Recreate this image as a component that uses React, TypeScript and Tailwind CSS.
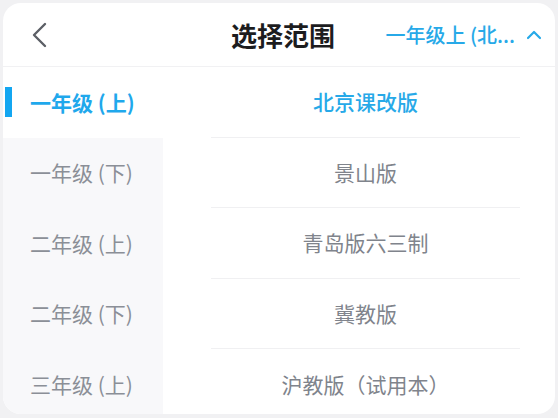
import React from "react";

const grades = ["一年级 (上)", "一年级 (下)", "二年级 (上)", "二年级 (下)", "三年级 (上)"];
const editions = ["北京课改版", "景山版", "青岛版六三制", "冀教版", "沪教版（试用本）"];

function App() {
  return (
    <div
      className="w-[558px] h-[418px] bg-[#f1f1f3] pt-[3px] px-[3px] pb-[4px]"
      style={{ fontFamily: '"Noto Sans CJK SC", "Noto Sans", sans-serif' }}
    >
      <div className="h-full bg-white rounded-[18px] overflow-hidden flex flex-col">
        {/* header */}
        <div className="h-[64px] flex items-center border-b border-[#f1f1f3] relative shrink-0">
          <div className="w-[72px] flex items-center pl-[26px]">
            <svg width="22" height="28" viewBox="0 0 22 28" fill="none">
              <path d="M16 3 L5 14 L16 25" stroke="#5c5f66" strokeWidth="2.4" strokeLinecap="round" strokeLinejoin="round" />
            </svg>
          </div>
          <div className="absolute left-0 right-0 top-0 h-full flex items-center justify-center pointer-events-none">
            <span className="text-[26px] font-bold text-[#1c1c1e] ml-[8px]">选择范围</span>
          </div>
          <div className="ml-auto flex items-center pr-[12px] gap-[10px]">
            <span className="text-[20px] font-medium text-[#27a9e8]">一年级上 (北...</span>
            <svg width="18" height="12" viewBox="0 0 18 12" fill="none">
              <path d="M3 9 L9 3 L15 9" stroke="#27a9e8" strokeWidth="2.2" strokeLinecap="round" strokeLinejoin="round" />
            </svg>
          </div>
        </div>

        {/* body */}
        <div className="flex flex-1 min-h-0 overflow-hidden">
          <div className="w-[160px] bg-[#f8f8fa] flex flex-col">
            {grades.map((g, i) => (
              <div
                key={g}
                className={
                  i === 0
                    ? "h-[70.5px] shrink-0 bg-white flex items-center relative pl-[27px] text-[21px] font-bold text-[#1fa8ec]"
                    : "h-[70.5px] shrink-0 flex items-center pl-[27px] text-[21px] text-[#8b8f97]"
                }
              >
                {i === 0 && <div className="absolute left-[2px] top-[20px] w-[7px] h-[30px] bg-[#13a6f1]" />}
                {g}
              </div>
            ))}
          </div>
          <div className="flex-1 flex flex-col pl-[48px] pr-[35px]">
            {editions.map((e, i) => (
              <div
                key={e}
                className={
                  "h-[70.5px] shrink-0 flex items-center justify-center text-[21px] " +
                  (i < editions.length - 1 ? "border-b border-[#f0f0f2] " : "") +
                  (i === 0 ? "font-medium text-[#27a9e8]" : "text-[#80848c]")
                }
              >
                {e}
              </div>
            ))}
          </div>
        </div>
      </div>
    </div>
  );
}

export default App;
